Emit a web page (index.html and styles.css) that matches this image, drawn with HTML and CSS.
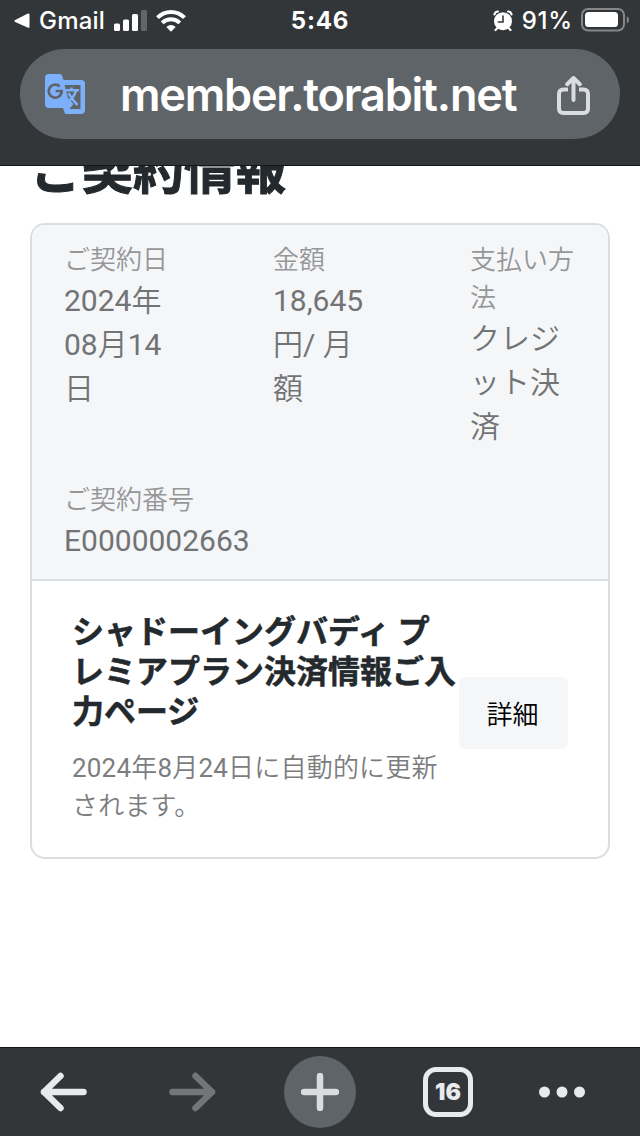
FILE: index.html
```html
<!DOCTYPE html>
<html lang="ja">
<head>
    <meta charset="UTF-8">
    <meta name="viewport" content="width=device-width, initial-scale=1.0">
    <title>ご契約情報</title>
    <link rel="stylesheet" href="styles.css">
</head>
<body>
    <header class="browser-top">
        <div class="status-bar">
            <div class="status-left">
                <svg class="back-app" width="16" height="16" viewBox="0 0 16 16"><path d="M1.2 6.9 13.4.8Q15.5 0 15.5 2v11.500q0 2-2 1.100L1.200 9Q-.3 8 1.200 6.900z" fill="#fff"/></svg>
                <span class="app-name">Gmail</span>
                <svg class="signal" width="34" height="22" viewBox="0 0 34 22">
                    <g fill="#fff">
                        <rect x="0" y="13.500" width="6" height="7.500" rx="1.500"/>
                        <rect x="9" y="9.500" width="6" height="11.500" rx="1.500"/>
                        <rect x="18" y="4" width="6" height="17" rx="1.500"/>
                    </g>
                    <rect x="27" y="0" width="6" height="21" rx="1.500" fill="#636668"/>
                </svg>
                <svg class="wifi" width="30" height="22" viewBox="0 0 30 22">
                    <g fill="none" stroke="#fff" stroke-width="4">
                        <path d="M1.500 7.700Q7.200 2 15 2t13.500 5.700"/>
                        <path d="M6.200 12.900Q10 9.300 15 9.300t8.800 3.600"/>
                    </g>
                    <path d="M10.300 17q4.700-4 9.400 0L15 21.700z" fill="#fff"/>
                </svg>
            </div>
            <div class="clock">5:46</div>
            <div class="status-right">
                <svg class="alarm" width="20" height="22" viewBox="0 0 20 22">
                    <g fill="none" stroke="#fff" stroke-width="2.200" stroke-linecap="round">
                        <path d="M1.500 4.300Q2 1.700 5 1.500M18.500 4.300Q18 1.700 15 1.500M4.500 18 2.500 20M15.500 18l2 2"/>
                    </g>
                    <circle cx="10" cy="11.200" r="9" fill="#fff"/>
                    <path d="M10 6v6H5.300" fill="none" stroke="#333639" stroke-width="1.600" stroke-linecap="round"/>
                </svg>
                <span class="percent">91%</span>
                <svg class="battery" width="48" height="24" viewBox="0 0 48 24">
                    <rect x="1" y="1" width="42" height="21.500" rx="6" fill="none" stroke="#858789" stroke-width="2"/>
                    <rect x="4" y="4" width="33" height="15" rx="3.500" fill="#fff"/>
                    <path d="M45.800 8q2.200 1 2.200 3.700t-2.200 3.800z" fill="#858789"/>
                </svg>
            </div>
        </div>
        <div class="address-bar">
            <svg class="translate" width="41" height="41" viewBox="0 0 41 41">
                <path d="M4 0h11q1.500 0 2 1.500L18.500 6H36q4 0 4 4v26q0 4-4 4H21.500q-1.500 0-2-1.500L18 34H4q-4 0-4-4V4q0-4 4-4z" fill="#7cb0fb"/>
                <path d="M19.500 11H35.500v24H24.500l4-5L23 24z" fill="#5f6468"/>
                <path d="M14.700 12.500a6.500 6.500 0 1 0 2 4.500h-6" fill="none" stroke="#5f6468" stroke-width="2.700"/>
                <path d="M20.500 16.200H34M26.500 13.500v3M31 16.500q-1.500 7-9.500 12.500M23.500 19q3 6 9 12" fill="none" stroke="#7cb0fb" stroke-width="2.500"/>
            </svg>
            <span class="url">member.torabit.net</span>
            <svg class="share" width="34" height="40" viewBox="0 0 34 40">
                <g fill="none" stroke="#dadce2" stroke-width="4" stroke-linecap="round" stroke-linejoin="round">
                    <path d="M11 13.400H6.500Q2 13.400 2 18v14.500Q2 37 6.500 37h20q4.500 0 4.500-4.500V18q0-4.600-4.500-4.600H22" stroke-linecap="butt"/>
                    <path d="M16.500 24V3M10.200 8.200l6.300-6.200 6.300 6.200"/>
                </g>
            </svg>
        </div>
    </header>

    <main class="page">
        <h1>ご契約情報</h1>
        <section class="card">
            <div class="card-header">
                <dl class="info">
                    <dt>ご契約日</dt>
                    <dd><span class="num">2024</span>年<br><span class="num">08</span>月<span class="num">14</span><br>日</dd>
                </dl>
                <dl class="info">
                    <dt>金額</dt>
                    <dd><span class="num">18,645</span><br>円<span class="num">/</span> 月<br>額</dd>
                </dl>
                <dl class="info">
                    <dt>支払い方<br>法</dt>
                    <dd>クレジ<br>ット決<br>済</dd>
                </dl>
                <dl class="info number">
                    <dt>ご契約番号</dt>
                    <dd><span class="num">E0000002663</span></dd>
                </dl>
            </div>
            <div class="card-body">
                <div class="plan">
                    <h2>シャドーイングバディ プ<br>レミアプラン決済情報ご入<br>力ページ</h2>
                    <p><span class="num">2024</span>年<span class="num">8</span>月<span class="num">24</span>日に自動的に更新<br>されます。</p>
                </div>
                <button class="detail" type="button">詳細</button>
            </div>
        </section>
    </main>

    <nav class="browser-bottom">
        <div class="tool">
            <svg width="48" height="40" viewBox="0 0 48 40"><path d="M43.500 20H4M20.500 4 4 20l16.500 16" fill="none" stroke="#e8eaed" stroke-width="6.500" stroke-linecap="round" stroke-linejoin="round"/></svg>
        </div>
        <div class="tool">
            <svg width="48" height="40" viewBox="0 0 48 40"><path d="M4.500 20H44M27.500 4 44 20 27.500 36" fill="none" stroke="#747576" stroke-width="6.500" stroke-linecap="round" stroke-linejoin="round"/></svg>
        </div>
        <div class="tool">
            <div class="new-tab">
                <svg width="38" height="38" viewBox="0 0 38 38"><path d="M19 3v32M3 19h32" stroke="#dadce0" stroke-width="6.500" stroke-linecap="round"/></svg>
            </div>
        </div>
        <div class="tool"><div class="tabs">16</div></div>
        <div class="tool more">
            <svg width="48" height="12" viewBox="0 0 48 12" fill="#e8eaed"><circle cx="6.500" cy="6" r="5.500"/><circle cx="24" cy="6" r="5.500"/><circle cx="41.500" cy="6" r="5.500"/></svg>
        </div>
    </nav>
</body>
</html>
```
FILE: styles.css
```css
* {
    box-sizing: border-box;
}

body {
    margin: 0;
    height: 1136px;
    display: flex;
    flex-direction: column;
    overflow: hidden;
    background: #fff;
    font-family: Roboto, "Noto Sans CJK JP", sans-serif;
}

svg {
    display: block;
    flex: none;
}

/* Browser chrome */
.browser-top {
    flex: none;
    height: 166px;
    background: #333639;
    border-bottom: 1px solid #141516;
    color: #fff;
    font-family: Inter, sans-serif;
}

.status-bar {
    display: grid;
    grid-template-columns: 1fr 60px 1fr;
    align-items: center;
    height: 40px;
    margin-bottom: 9px;
    padding: 1px 11px 0 14px;
    font-size: 24px;
    line-height: 40px;
}

.status-left,
.status-right {
    display: flex;
    align-items: center;
}

.status-right {
    justify-content: flex-end;
}

.battery {
    margin-top: -2px;
}

.app-name {
    width: 66px;
    margin: 0 9px 0 9px;
    font-weight: 500;
    letter-spacing: 0.2px;
}

.wifi {
    margin-left: 8px;
}

.clock {
    margin-left: -3px;
    text-align: center;
    font-weight: 700;
    letter-spacing: 0.8px;
}

.percent {
    margin: 0 8px 0 9px;
    font-weight: 500;
    letter-spacing: 0.8px;
}

.address-bar {
    display: flex;
    align-items: center;
    height: 90px;
    margin: 0 20px;
    padding: 0 29px 0 25px;
    border-radius: 45px;
    background: #5f6468;
}

.url {
    flex: 1;
    margin-left: 34px;
    font-size: 45px;
    font-weight: 600;
    letter-spacing: -1.2px;
    white-space: nowrap;
}

.share {
    margin-top: 3px;
}

/* Page content */
.page {
    flex: 1;
    min-height: 0;
    overflow: hidden;
    padding: 0 30px;
}

h1 {
    margin: -27px 0 18px 1px;
    font-size: 51px;
    line-height: 66px;
    font-weight: 700;
    color: #23292d;
    -webkit-text-stroke: 1px #23292d;
}

.card {
    height: 636px;
    border: 2px solid #dbdee1;
    border-radius: 15px;
    overflow: hidden;
}

.card-header {
    display: grid;
    grid-template-columns: 209px 197px 1fr;
    grid-template-rows: 240px 1fr;
    height: 356px;
    padding: 16px 0 0 32px;
    border-bottom: 2px solid #dbdee1;
    background: #f5f6f8;
}

.info {
    margin: 0;
}

.number {
    grid-column: 1 / -1;
}

dt {
    font-size: 26px;
    line-height: 38px;
    font-weight: 350;
    color: #959698;
}

dd {
    margin: 0;
    font-size: 30px;
    line-height: 44px;
    font-weight: 350;
    color: #727375;
}

.num {
    font-weight: 400;
}

.card-body {
    display: flex;
    align-items: center;
    padding: 31px 40px 0 40px;
}

.plan {
    width: 387px;
    flex: none;
    white-space: nowrap;
}

h2 {
    margin: 0;
    font-size: 32px;
    line-height: 40px;
    font-weight: 700;
    color: #23292d;
    -webkit-text-stroke: 0.5px #23292d;
}

.plan p {
    margin: 17px 0 0;
    font-size: 26px;
    line-height: 38px;
    font-weight: 350;
    letter-spacing: 0.2px;
    color: #7c7d7f;
}

.detail {
    width: 109px;
    height: 72px;
    padding: 4px 2px 0 0;
    margin-bottom: 12px;
    border: 0;
    border-radius: 7px;
    background: #f5f6f8;
    color: #000;
    font: 350 26px/68px Roboto, "Noto Sans CJK JP", sans-serif;
}

/* Bottom toolbar */
.browser-bottom {
    flex: none;
    display: grid;
    grid-template-columns: repeat(5, 128px);
    height: 89px;
    border-top: 1px solid #141516;
    background: #333639;
}

.tool {
    display: flex;
    align-items: center;
    justify-content: center;
}

.new-tab {
    display: flex;
    align-items: center;
    justify-content: center;
    width: 72px;
    height: 72px;
    border-radius: 50%;
    background: #5f6468;
}

.tabs {
    width: 50px;
    height: 50px;
    border: 5px solid #e8eaed;
    border-radius: 13px;
    color: #e8eaed;
    font: 900 23px/41px Inter, sans-serif;
    text-align: center;
}

.more {
    padding-right: 28px;
}
```
